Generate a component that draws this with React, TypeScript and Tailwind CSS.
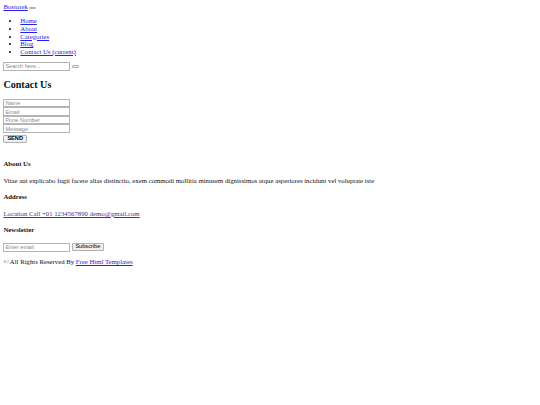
const navItems = ['Home', 'About', 'Categories', 'Blog', 'Contact Us (current)']

const inputCls =
  "block w-[67px] h-[8.6px] border border-[#b4b4b4] bg-white px-[1px] text-[5.6px] leading-none font-['Liberation_Sans',sans-serif] text-black placeholder:text-[#8a8a8a] outline-none"

const btnCls =
  "border border-[#b0b0b0] rounded-[1px] bg-[#efefef] px-[2.5px] text-[5.6px] leading-none font-['Liberation_Sans',sans-serif] text-black"

const linkCls = 'underline decoration-[0.5px] underline-offset-[1px]'

function EmptyButton() {
  return <button className="inline-block align-middle ml-[1.5px] w-[7px] h-[2.6px] border border-[#b0b0b0] bg-[#efefef] rounded-[1px]" />
}

export default function App() {
  return (
    <div className="min-h-[405px] bg-white p-[3.4px] text-[6.75px] leading-[7.6px] text-[#111] antialiased font-['Liberation_Serif','Times_New_Roman',serif]">
      <header>
        <div>
          <a href="#" className={'text-[#2222ee] ' + linkCls}>Bostorek</a>
          <EmptyButton />
        </div>
        <ul className="mt-[6.4px] mb-[6.75px] pl-[16.9px] list-disc">
          {navItems.map((item) => (
            <li key={item}>
              <a href="#" className={'text-[#2222ee] ' + linkCls}>{item}</a>
            </li>
          ))}
        </ul>
        <form className="flex items-center h-[8.6px]">
          <input className={inputCls} placeholder="Search here..." />
          <EmptyButton />
        </form>
      </header>

      <section>
        <h2 className="my-[8.2px] text-[10.1px] leading-[11.6px] font-bold">Contact Us</h2>
        <form>
          <input className={inputCls} placeholder="Name" />
          <input className={inputCls} placeholder="Email" />
          <input className={inputCls} placeholder="Pone Number" />
          <input className={inputCls} placeholder="Message" />
          <button type="button" className={btnCls + ' mt-[1.5px] h-[8.2px] px-[3px] font-semibold'}>SEND</button>
        </form>
      </section>

      <footer className="mt-[17.3px]">
        <h4 className="mb-[9px] font-bold">About Us</h4>
        <p className="mb-[9px]">
          Vitae aut explicabo fugit facere alias distinctio, exem commodi mollitia minusem dignissimos atque asperiores incidunt vel voluptate iste
        </p>
        <h4 className="mb-[9px] font-bold">Address</h4>
        <p className="mb-[9px]">
          <a href="#" className={'text-[#5a2a8b] ' + linkCls}>Location Call +01 1234567890 demo@gmail.com</a>
        </p>
        <h4 className="mb-[9px] font-bold">Newsletter</h4>
        <form className="flex items-center gap-[1.5px]">
          <input className={inputCls} placeholder="Enter email" />
          <button type="button" className={btnCls + ' h-[8px] px-[2.5px]'}>Subscribe</button>
        </form>
        <p className="mt-[6.75px]">
          © All Rights Reserved By{' '}
          <a href="#" className={'text-[#2222ee] ' + linkCls}>Free Html Templates</a>
        </p>
      </footer>
    </div>
  )
}
